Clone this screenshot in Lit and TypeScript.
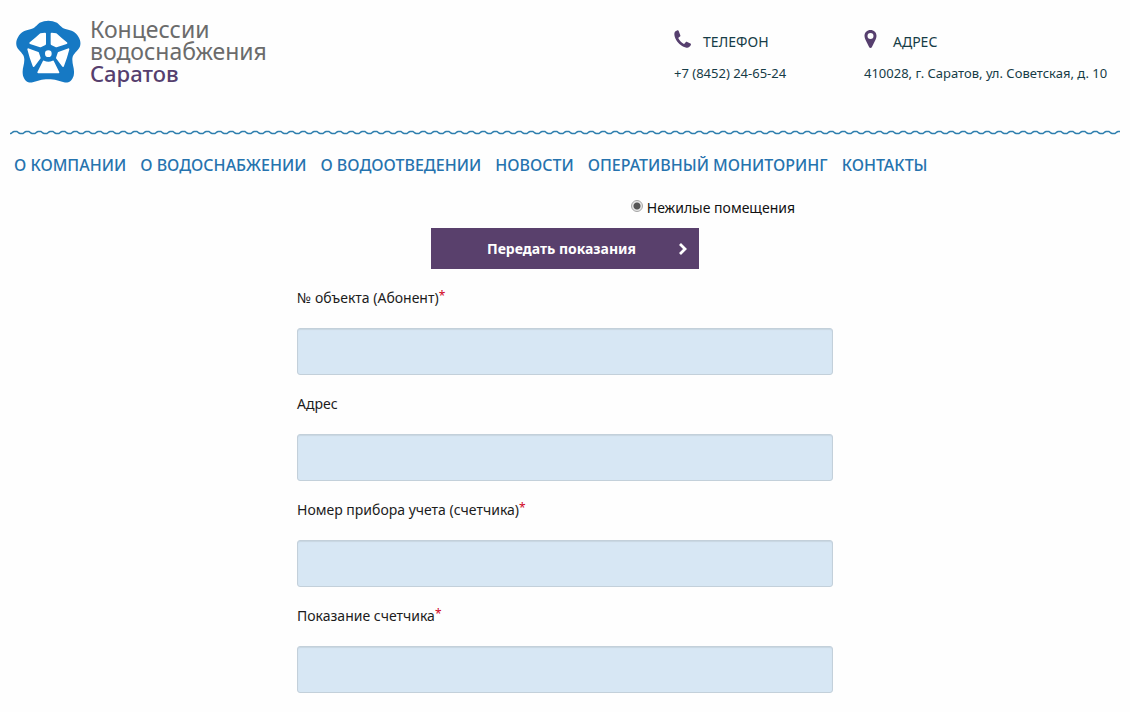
import { LitElement, html, css, svg } from "lit";
import { customElement, property } from "lit/decorators.js";

const NAV = ["О компании", "О водоснабжении", "О водоотведении", "Новости", "Оперативный мониторинг", "Контакты"];

const FIELDS = [
  { id: "object", label: "№ объекта (Абонент)", required: true },
  { id: "address", label: "Адрес", required: false },
  { id: "meter", label: "Номер прибора учета (счетчика)", required: true },
  { id: "value", label: "Показание счетчика", required: true },
];

const valveWindows = svg`
  <g fill="#fff" stroke="#fff" stroke-width="6" stroke-linejoin="round">
    <path d="M135 71V102L121 109L91 99Q104 90 122 73Z" />
    <path d="M155 71V102L169 109L199 99Q186 90 168 73Z" />
    <path d="M85 118L114 129L119 144L101 168Q91 142 85 118Z" />
    <path d="M205 118L176 129L171 144L189 168Q199 142 205 118Z" />
    <path d="M131 155Q145 162 159 155L175 187H115Z" />
  </g>`;

@customElement("site-header")
export class SiteHeader extends LitElement {
  static styles = css`
    :host { display: block; }
    .top {
      display: grid;
      grid-template-columns: 1fr 190px 256px;
      padding: 20px 10px 0;
      min-height: 130px;
      box-sizing: border-box;
    }
    .logo { display: flex; gap: 9px; padding-left: 5px; text-decoration: none; }
    .mark { width: 66px; height: 64px; flex: none; }
    .name { width: 190px; margin-top: -2px; font: 23px/22px "Noto Sans", sans-serif; color: #6b6b6b; }
    .name span { display: block; }
    .name .city { color: #563f6e; font-size: 22px; font-weight: 500; line-height: 22px; }
    .contact { color: #163c47; font-size: 13px; }
    .title { display: flex; align-items: center; gap: 12px; height: 42px; font-size: 14px; text-transform: uppercase; }
    .title svg { width: 17px; height: 20px; flex: none; margin-bottom: 4px; }
    .contact p { margin: 1px 0 0; line-height: 20px; white-space: nowrap; }
    .wave { display: block; width: calc(100% - 20px); height: 5px; margin: 0 10px; }
    nav { display: flex; flex-wrap: wrap; gap: 0 14px; padding: 18px 14px 0; }
    nav a {
      color: #2673ae;
      font-size: 16px;
      line-height: 24px;
      font-weight: 500;
      text-transform: uppercase;
      text-decoration: none;
    }
  `;

  render() {
    return html`
      <header>
        <div class="top">
          <a class="logo" href="#">
            <svg class="mark" viewBox="45 30 198 192" aria-hidden="true">
              <path fill="#1679c4" d="M119 38Q145 26 171 38C181 46 185 54 199 58C214 62 227 64 236 82C244 96 243 110 233 120C224 130 217 136 217 149C217 166 225 177 221 197C216 213 205 220 192 217C177 213 165 208 145 208C125 208 113 213 98 217C85 220 74 213 69 197C65 177 73 166 73 149C73 136 66 130 57 120C47 110 46 96 54 82C63 64 76 62 91 58C105 54 109 46 119 38Z" />
              ${valveWindows}
              <circle cx="145" cy="131" r="19" fill="#1679c4" />
              <circle cx="145" cy="131" r="10" fill="#fff" />
            </svg>
            <span class="name"><span>Концессии водоснабжения</span><span class="city">Саратов</span></span>
          </a>
          <div class="contact">
            <div class="title">
              <svg viewBox="0 0 17 20" aria-hidden="true">
                <path fill="#563f6e" d="M3.5 1.2 1.5 2.2C-.4 4 .2 7.600 2.200 11.100C4.500 15 8.500 18 12.500 18.700C14.500 19 16.200 17.700 16.900 15.800C17.100 15.200 16.900 14.900 16.400 14.600L13.200 12.900C12.700 12.600 12.300 12.700 11.900 13.100L10.600 14.600C10.300 14.900 10 15 9.600 14.700C7.500 13.500 5.600 11.500 4.500 9.400C4.300 9 4.400 8.700 4.700 8.500L6 7.400C6.400 7.100 6.500 6.700 6.300 6.200L4.700 1.900C4.500 1.300 4.100 1 3.500 1.200Z" />
              </svg>
              <span>Телефон</span>
            </div>
            <p>+7 (8452) 24-65-24</p>
          </div>
          <div class="contact">
            <div class="title">
              <svg viewBox="0 0 17 20" aria-hidden="true">
                <path fill="#563f6e" fill-rule="evenodd" d="M6.500 1C3 1 .5 3.500 .5 7C.5 8.500 1 9.800 1.600 11L5.200 18.200C5.700 19.300 7.300 19.300 7.800 18.200L11.400 11C12 9.800 12.500 8.500 12.500 7C12.500 3.500 10 1 6.500 1ZM6.500 4A3 3 0 1 1 6.500 10A3 3 0 1 1 6.500 4Z" />
              </svg>
              <span>Адрес</span>
            </div>
            <p>410028, г. Саратов, ул. Советская, д. 10</p>
          </div>
        </div>
        <svg class="wave" aria-hidden="true">
          <defs>
            <pattern id="ripple" width="12" height="5" patternUnits="userSpaceOnUse">
              <path d="M0 3.500H1L3 2L4 1.500H7L9 3L10 3.500H12" fill="none" stroke="#2f7fae" stroke-width="1.500" />
            </pattern>
          </defs>
          <rect width="100%" height="5" fill="url(#ripple)" />
        </svg>
        <nav>${NAV.map((item) => html`<a href="#">${item}</a>`)}</nav>
      </header>
    `;
  }
}

@customElement("form-field")
export class FormField extends LitElement {
  @property() name = "";
  @property() label = "";
  @property({ type: Boolean }) required = false;

  static styles = css`
    :host { display: block; }
    label { display: block; font-size: 14px; line-height: 20px; color: #1c1c1c; }
    .star { color: #d0021b; font-size: 12px; line-height: 16px; vertical-align: top; }
    input {
      display: block;
      width: 100%;
      height: 47px;
      margin-top: 20px;
      padding: 6px 12px;
      box-sizing: border-box;
      border: 1px solid #c3d0da;
      border-radius: 3px;
      box-shadow: inset 0 1px 1px #c8d6e2;
      background: #d7e7f4;
      font: 14px "Noto Sans", sans-serif;
    }
  `;

  render() {
    return html`
      <label for=${this.name}>${this.label}${this.required ? html`<span class="star">*</span>` : ""}</label>
      <input id=${this.name} name=${this.name} type="text" ?required=${this.required} />
    `;
  }
}

@customElement("app-root")
export class AppRoot extends LitElement {
  static styles = css`
    :host {
      display: block;
      background: #fefefe;
      font-family: "Noto Sans", sans-serif;
    }
    form { max-width: 536px; margin: 0 auto; padding: 20px 0 19px; }
    .kind {
      display: flex;
      justify-content: flex-end;
      gap: 4px;
      padding-right: 38px;
      font-size: 14px;
      line-height: 22px;
      color: #111;
    }
    .kind input {
      appearance: none;
      width: 12px;
      height: 12px;
      margin: 3px 0 0;
      border: 1px solid #a5a5a5;
      border-radius: 50%;
      background: radial-gradient(circle, #555 0 3px, #e6e6e6 4px);
    }
    .send {
      display: flex;
      align-items: center;
      justify-content: space-between;
      width: 50%;
      height: 41px;
      margin: 9px auto 19px;
      padding: 0 11px 0 56px;
      border: 0;
      background: #59406c;
      color: #fff;
      font: bold 14px "Noto Sans", sans-serif;
      white-space: nowrap;
    }
    .send svg { width: 10px; height: 14px; flex: none; }
    .fields { display: grid; gap: 19px; }
  `;

  render() {
    return html`
      <site-header></site-header>
      <main>
        <form>
          <div class="kind">
            <input id="nonres" type="radio" name="kind" checked />
            <label for="nonres">Нежилые помещения</label>
          </div>
          <button class="send" type="button">
            <span>Передать показания</span>
            <svg viewBox="0 0 10 14" aria-hidden="true">
              <path d="M2 2L7 7L2 12" fill="none" stroke="#fff" stroke-width="2.800" />
            </svg>
          </button>
          <div class="fields">
            ${FIELDS.map((f) => html`<form-field .name=${f.id} .label=${f.label} .required=${f.required}></form-field>`)}
          </div>
        </form>
      </main>
    `;
  }
}
